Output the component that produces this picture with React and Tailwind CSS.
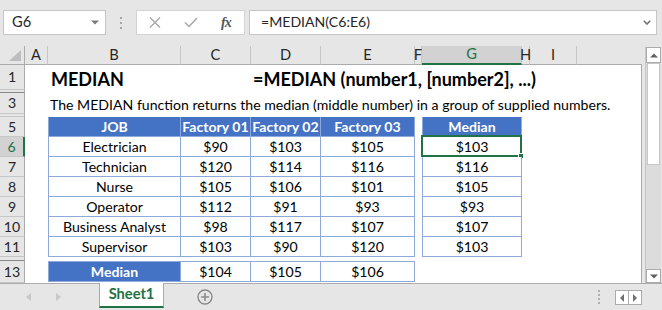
import React from "react";

const COLS =
  "grid grid-cols-[25px_23px_133px_70px_70px_94px_7px_100px_8px_47px_1fr]";

const DATA = [
  ["6", "Electrician", "$90", "$103", "$105", "$103"],
  ["7", "Technician", "$120", "$114", "$116", "$116"],
  ["8", "Nurse", "$105", "$106", "$101", "$105"],
  ["9", "Operator", "$112", "$91", "$93", "$93"],
  ["10", "Business Analyst", "$98", "$117", "$107", "$107"],
  ["11", "Supervisor", "$103", "$90", "$120", "$103"],
];

function RowHead({ n, sel }) {
  if (sel) {
    return (
      <div className="flex items-center justify-center pt-px bg-[#d2d2d2] text-[#217346] border-r-2 border-r-[#217346] border-b border-b-[#c6c6c6]">
        {n}
      </div>
    );
  }
  return (
    <div className="flex items-center justify-center pt-px bg-[#e6e6e6] text-[#262626] border-r border-r-[#ababab] border-b border-b-[#c6c6c6]">
      {n}
    </div>
  );
}

function ColHead({ children, sel }) {
  if (sel) {
    return (
      <div className="flex items-center justify-center bg-[#d2d2d2] text-[#217346] border-r border-r-[#c6c6c6] border-b-2 border-b-[#217346]">
        {children}
      </div>
    );
  }
  return (
    <div className="flex items-center justify-center text-[#262626] border-r border-r-[#c6c6c6] border-b border-b-[#ababab]">
      {children}
    </div>
  );
}

function TCell({ children, left, selected }) {
  return (
    <div
      className={
        "relative bg-white flex items-center justify-center pt-px border-r border-b border-[#8ea9db] " +
        (left ? "border-l" : "")
      }
    >
      {children}
      {selected && (
        <>
          <div className="absolute -left-[2px] -top-[2px] -right-px -bottom-px border-2 border-[#217346]" />
          <div className="absolute -right-[3px] -bottom-[3px] w-[6px] h-[6px] bg-[#217346] border border-white" />
        </>
      )}
    </div>
  );
}

function HCell({ children, left }) {
  return (
    <div
      className={
        "flex items-center justify-center pt-px bg-[#4472c4] text-white font-bold border-r border-b border-[#8ea9db] " +
        (left ? "border-l" : "")
      }
    >
      {children}
    </div>
  );
}

const W = () => <div className="bg-white" />;

export default function App() {
  return (
    <div className="w-[662px] h-[310px] overflow-hidden bg-[#e6e6e6] flex flex-col [font-family:Lato,'Open_Sans',sans-serif] text-[14.1px] text-black leading-none">
      {/* formula bar */}
      <div className="h-[46px] shrink-0 flex items-start pt-[10px] pl-[3px]">
        <div className="w-[103px] h-[25px] bg-white border border-[#c6c6c6] flex items-center justify-between pl-[8px] pr-[6px]">
          <span className="text-[#262626] text-[14.67px]">G6</span>
          <svg width="8" height="5" viewBox="0 0 8 5">
            <path d="M0 0.5h8L4 4.5z" fill="#7a7a7a" />
          </svg>
        </div>
        <div className="ml-[14px] h-[25px] w-[2px] flex flex-col justify-center gap-[3px]">
          <div className="w-[2px] h-[2px] bg-[#a6a6a6]" />
          <div className="w-[2px] h-[2px] bg-[#a6a6a6]" />
          <div className="w-[2px] h-[2px] bg-[#a6a6a6]" />
        </div>
        <div className="ml-[14px] w-[109px] h-[25px] bg-white border border-[#d4d4d4] flex items-center pl-[12px] gap-[23px]">
          <svg width="12" height="11" viewBox="0 0 12 11">
            <path d="M1 0.5L11 10.5M11 0.5L1 10.5" stroke="#a6a6a6" strokeWidth="1.3" />
          </svg>
          <svg width="14" height="11" viewBox="0 0 14 11">
            <path d="M1 5.5L5 9.5L13 1" stroke="#a6a6a6" strokeWidth="1.5" fill="none" />
          </svg>
          <span className="[font-family:'Liberation_Serif',serif] italic font-bold text-[14px] text-[#555] tracking-[-1px]">
            fx
          </span>
        </div>
        <div className="ml-[4px] w-[408px] h-[25px] bg-white border border-[#c6c6c6] flex items-center justify-between pl-[11px] pr-[5px]">
          <span className="text-[#262626]">=MEDIAN(C6:E6)</span>
          <svg width="8" height="5" viewBox="0 0 8 5">
            <path d="M0.8 0.8L4 4L7.2 0.8" stroke="#707070" strokeWidth="1.6" fill="none" />
          </svg>
        </div>
      </div>

      {/* middle */}
      <div className="h-[237px] shrink-0 flex">
        <div className="w-[642px] flex flex-col">
          {/* column headers */}
          <div className={COLS + " h-[19px] text-[14.67px]"}>
            <div className="relative border-r border-r-[#ababab] border-b border-b-[#ababab]">
              <svg className="absolute left-0 top-0" width="24" height="18" viewBox="0 0 24 18">
                <path d="M9 15H21V4z" fill="#bdbdbd" />
              </svg>
            </div>
            <ColHead>A</ColHead>
            <ColHead>B</ColHead>
            <ColHead>C</ColHead>
            <ColHead>D</ColHead>
            <ColHead>E</ColHead>
            <ColHead>F</ColHead>
            <ColHead sel>G</ColHead>
            <ColHead>H</ColHead>
            <ColHead>I</ColHead>
            <div className="border-b border-b-[#ababab]" />
          </div>

          <div className="flex-1 flex flex-col border-r border-[#ababab]">
            {/* row 1 */}
            <div className={COLS + " h-[25px]"}>
              <RowHead n="1" />
              <W />
              <div className="bg-white flex items-end pl-[3px] pb-[2px] font-bold text-[18px] whitespace-nowrap">
                MEDIAN
              </div>
              <W />
              <div className="col-span-7 bg-white flex items-end pl-[2px] pb-[2px] font-bold text-[18px] whitespace-nowrap">
                =MEDIAN (number1, [number2], ...)
              </div>
            </div>
            {/* row 2 */}
            <div className={COLS + " h-[3px]"}>
              <div className="bg-[#e6e6e6] border-r border-r-[#ababab] border-b border-b-[#8a8a8a]" />
              <div className="col-span-10 bg-white" />
            </div>
            {/* row 3 */}
            <div className={COLS + " h-[21px]"}>
              <RowHead n="3" />
              <W />
              <div className="col-span-9 bg-white flex items-end pl-[2px] pb-[2px] whitespace-nowrap">
                The MEDIAN function returns the median (middle number) in a group of supplied numbers.
              </div>
            </div>
            {/* row 4 */}
            <div className={COLS + " h-[3px]"}>
              <div className="bg-[#e6e6e6] border-r border-r-[#ababab] border-b border-b-[#c6c6c6]" />
              <div className="col-span-10 bg-white" />
            </div>
            {/* row 5 */}
            <div className={COLS + " h-[20px]"}>
              <RowHead n="5" />
              <W />
              <HCell left>JOB</HCell>
              <HCell>Factory 01</HCell>
              <HCell>Factory 02</HCell>
              <HCell>Factory 03</HCell>
              <W />
              <HCell left>Median</HCell>
              <W />
              <W />
              <W />
            </div>
            {DATA.map((r, i) => (
              <div key={r[0]} className={COLS + " h-[20px]"}>
                <RowHead n={r[0]} sel={i === 0} />
                <W />
                <TCell left>{r[1]}</TCell>
                <TCell>{r[2]}</TCell>
                <TCell>{r[3]}</TCell>
                <TCell>{r[4]}</TCell>
                <W />
                <TCell left selected={i === 0}>
                  {r[5]}
                </TCell>
                <W />
                <W />
                <W />
              </div>
            ))}
            {/* row 12 */}
            <div className={COLS + " h-[4px]"}>
              <div className="bg-[#e6e6e6] border-r border-r-[#ababab] border-b border-b-[#8a8a8a]" />
              <div className="col-span-10 bg-white" />
            </div>
            {/* row 13 */}
            <div className={COLS + " h-[22px]"}>
              <RowHead n="13" />
              <div className="bg-white" />
              <div className="bg-white pb-px">
                <div className="h-full flex items-center justify-center pt-px bg-[#4472c4] text-white font-bold border border-[#8ea9db]">
                  Median
                </div>
              </div>
              <div className="bg-white pb-px">
                <div className="h-full flex items-center justify-center pt-px border-y border-r border-[#8ea9db]">
                  $104
                </div>
              </div>
              <div className="bg-white pb-px">
                <div className="h-full flex items-center justify-center pt-px border-y border-r border-[#8ea9db]">
                  $105
                </div>
              </div>
              <div className="bg-white pb-px">
                <div className="h-full flex items-center justify-center pt-px border-y border-r border-[#8ea9db]">
                  $106
                </div>
              </div>
              <div className="col-span-5 bg-white" />
            </div>
          </div>
        </div>

        {/* vertical scrollbar */}
        <div className="w-[20px] pl-[3px] pr-px pt-px">
          <div className="h-full flex flex-col bg-[#dcdcdc] border-l border-[#c6c6c6]">
            <div className="h-[16px] bg-white border border-[#ababab] flex items-center justify-center">
              <svg width="8" height="5" viewBox="0 0 8 5">
                <path d="M0 4.5h8L4 0.5z" fill="#606060" />
              </svg>
            </div>
            <div className="h-[102px] mx-px bg-white border border-[#c6c6c6]" />
            <div className="flex-1" />
            <div className="h-[14px] bg-white border border-[#ababab] flex items-center justify-center">
              <svg width="8" height="5" viewBox="0 0 8 5">
                <path d="M0 0.5h8L4 4.5z" fill="#606060" />
              </svg>
            </div>
          </div>
        </div>
      </div>

      {/* sheet tabs */}
      <div className="h-[27px] shrink-0 border-t border-[#ababab] flex items-start">
        <div className="w-[99px] h-[26px] flex items-center pl-[26px] gap-[25px]">
          <svg width="5" height="8" viewBox="0 0 5 8">
            <path d="M5 0V8L0 4z" fill="#c8c8c8" />
          </svg>
          <svg width="5" height="8" viewBox="0 0 5 8">
            <path d="M0 0V8L5 4z" fill="#c8c8c8" />
          </svg>
        </div>
        <div className="-mt-px w-[65px] h-[25px] bg-white border-x border-[#ababab] border-b-2 border-b-[#217346] flex items-center justify-center font-bold text-[14.67px] text-[#217346]">
          Sheet1
        </div>
        <div className="ml-[33px] h-[26px] flex items-center">
          <svg width="16" height="16" viewBox="0 0 16 16">
            <circle cx="8" cy="8" r="7" stroke="#8a8a8a" strokeWidth="1.4" fill="none" />
            <path d="M8 4V12M4 8H12" stroke="#8a8a8a" strokeWidth="1.6" />
          </svg>
        </div>
        <div className="ml-auto h-[26px] flex flex-col justify-center gap-[2px]">
          <div className="w-[2px] h-[2px] bg-[#b0b0b0]" />
          <div className="w-[2px] h-[2px] bg-[#b0b0b0]" />
          <div className="w-[2px] h-[2px] bg-[#b0b0b0]" />
          <div className="w-[2px] h-[2px] bg-[#b0b0b0]" />
        </div>
        <div className="ml-[15px] mr-[20px] mt-[6px] h-[15px] flex border border-[#ababab] bg-white">
          <div className="w-[13px] flex items-center justify-center border-r border-[#ababab]">
            <svg width="4" height="8" viewBox="0 0 4 8">
              <path d="M4 0V8L0 4z" fill="#707070" />
            </svg>
          </div>
          <div className="w-[12px] flex items-center justify-center">
            <svg width="4" height="8" viewBox="0 0 4 8">
              <path d="M0 0V8L4 4z" fill="#707070" />
            </svg>
          </div>
        </div>
      </div>
    </div>
  );
}
